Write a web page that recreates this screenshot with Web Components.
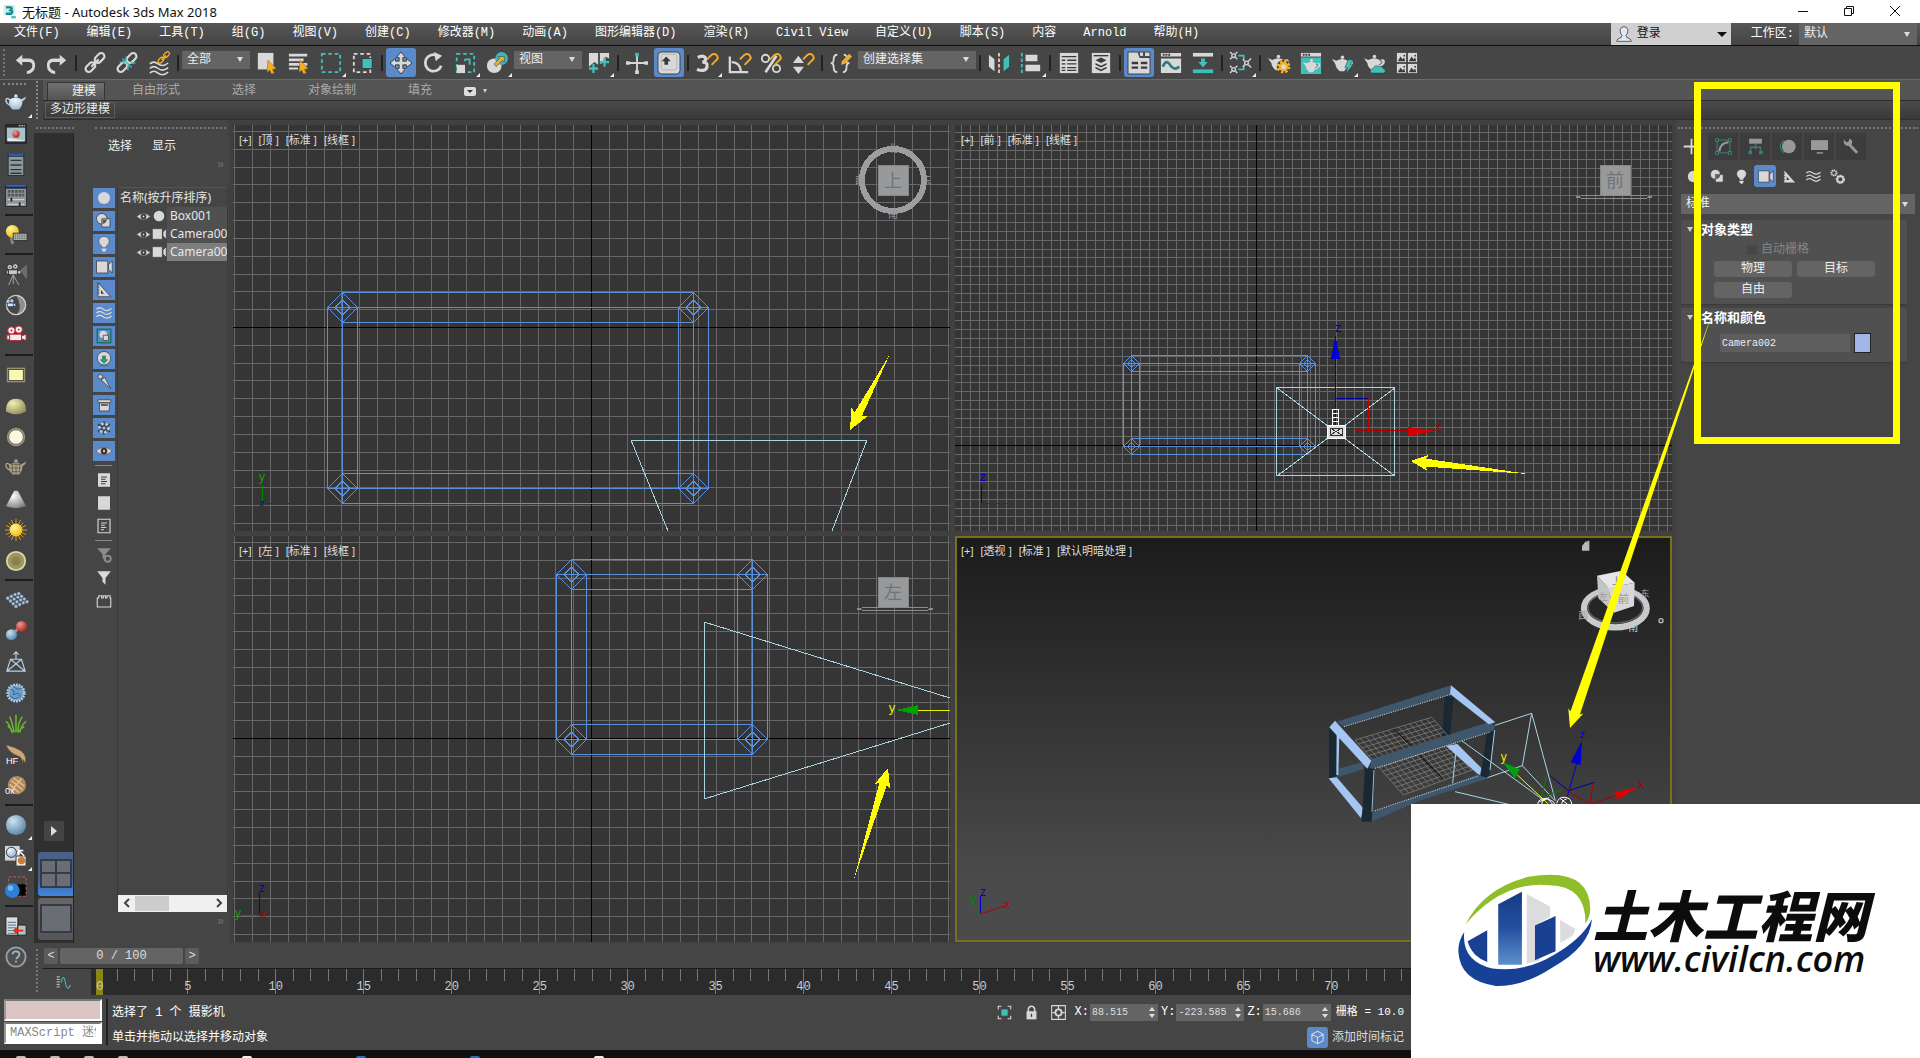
<!DOCTYPE html>
<html lang="zh-CN">
<head>
<meta charset="utf-8">
<title>无标题 - Autodesk 3ds Max 2018</title>
<style>
html, body { margin: 0; height: 100%; overflow: hidden; }
body {
    background: #454545;
    color: #e6e6e6;
    font: 12px/16px "Liberation Mono", "Noto Sans CJK SC", monospace;
    --teal: #3fc1b9;
    --blue: #5b8acb;
    --field: #646464;
}
</style>
</head>
<body>
<max-app></max-app>

<script>
const W = "#d8d8d8", T = "#3fc1b9", Y = "#f4ae25", K = "#3a3a3a";

const teapot = (c, x = 0, y = 0, s = 1) => `<g transform="translate(${x} ${y}) scale(${s})"><path d="M6 9Q1 5 1 9t6 6" fill="none" stroke="${c}" stroke-width="1.500"/><path fill="${c}" d="M5 8q7-4 13 0l5-3-1 3-3 2q0 6-4 9H8Q3 15 5 8z"/><circle cx="12" cy="4.500" r="2" fill="${c}"/></g>`;
const teapotDark = (c, x = 0, y = 0, s = 1) => `<g transform="translate(${x} ${y}) scale(${s})"><path fill="${c}" d="M0 6l5 2q7-4 13 0 6-2 6 2t-8 7l-2 3H9Q4 16 4 12z"/><circle cx="12" cy="4" r="2" fill="${c}"/><path d="M18 9q4 0 2 3l-3 2" fill="none" stroke="${K}"/></g>`;
const magnet = (x = 0, y = 0) => `<path transform="translate(${x} ${y})" d="M12 8l5-5q4-2 6 1t-1 5l-5 5" fill="none" stroke="${Y}" stroke-width="2"/>`;
const cursor = `<path d="M13 9l9 9-4 1 2 4-3 1-2-4-3 2z" fill="${Y}" stroke="#7b5410" stroke-width=".5"/>`;
const chain = (c) => `<g fill="none" stroke="${c}" stroke-width="2.4"><rect x="11" y="3" width="12" height="7" rx="3.5" transform="rotate(-45 17 6.500)"/><rect x="1" y="13" width="12" height="7" rx="3.500" transform="rotate(-45 7 16.500)"/></g>`;
const waves = (c) => `<g fill="none" stroke="${c}" stroke-width="1.700"><path d="M2 7q4-4 9 0t11-1"/><path d="M2 12q4-4 9 0t11-1"/><path d="M2 17q4-4 9 0t11-1"/></g>`;
const movieCam = (c, o) => `<g fill="${c}" stroke="${o}"><circle cx="7" cy="6" r="4"/><circle cx="15" cy="5" r="4"/><rect x="5" y="10" width="13" height="7"/><path d="M18 12l5-2v7l-5-2zM2 11h3v5H2z"/></g><circle cx="7" cy="6" r="1" fill="${o}"/><circle cx="15" cy="5" r="1" fill="${o}"/>`;

const icons = {
    undo: `<path d="M9 3L2 9l7 6v-4h7q4 0 4 4t-6 6v3q9-1 9-9t-7-8H9z" fill="${W}"/>`,
    redo: `<path d="M15 3l7 6-7 6v-4H8q-4 0-4 4t6 6v3Q1 23 1 15t7-8h7z" fill="${W}"/>`,
    link: chain(W) + `<path d="M8 16l8-8" stroke="${W}" stroke-width="2.400"/>`,
    unlink: chain(W) + `<path d="M7 7l10 10M11 5v4M4 11h5M13 15v5M16 12h5" stroke="${T}" stroke-width="1.500"/>`,
    bind: `<g transform="translate(0 6)">${waves(W)}</g><g transform="translate(10 -1) scale(.6)"><g stroke-width="2">${chain(Y)}</g><path d="M8 16l8-8" stroke="${Y}" stroke-width="3"/></g>`,
    select: `<path d="M2 1h17v18H2z" fill="${W}"/>` + cursor,
    byname: `<path d="M1 2h20v3H1zM1 7h16v3H1zM1 12h20v3H1zM1 17h10v2H1z" fill="${W}"/>` + cursor,
    region: `<rect x="2" y="2" width="20" height="20" fill="none" stroke="${T}" stroke-width="2" stroke-dasharray="4 3"/>`,
    window: `<rect x="2" y="2" width="18" height="20" fill="none" stroke="${W}" stroke-width="2" stroke-dasharray="4 3"/><rect x="11" y="7" width="11" height="11" fill="${T}" stroke="${K}"/>`,
    move: `<path d="M12 0l5 6h-3v4h4V7l6 5-6 5v-3h-4v4h3l-5 6-5-6h3v-4H6v3l-6-5 6-5v3h4V6H7z" fill="${W}" stroke="${K}"/>`,
    rotate: `<path d="M17 4A9 9 0 1 0 21 15" fill="none" stroke="${W}" stroke-width="3"/><path d="M13 0l9 4-7 6z" fill="${W}"/>`,
    scale: `<rect x="3" y="2" width="19" height="20" fill="none" stroke="${T}" stroke-width="2" stroke-dasharray="4 3"/><path d="M3 14h9v9H3z" fill="${W}"/><path d="M12 8h5v6M12 8v2" fill="none" stroke="${T}" stroke-width="2"/>`,
    place: `<circle cx="9" cy="15" r="8" fill="${W}"/><circle cx="17" cy="7" r="7" fill="#3fb3c4"/><path d="M9 13l6-6-2-2h7v6l-2-2-7 7z" fill="${Y}" stroke="${K}" stroke-width=".6"/>`,
    pivot: `<path d="M1 1h10v13l-4-3-6 5zM13 1h10v6l-4-2v5l-6 3z" fill="${W}"/><path d="M6 13v10M1 18h10M18 6v10M13 11h10" stroke="${T}" stroke-width="2.500"/>`,
    manipulate: `<path d="M3 12h18M12 4v17" stroke="${W}" stroke-width="2"/><path d="M0 10h4v4H0zM20 10h4v4h-4zM10 20h4v4h-4z" fill="${W}"/><path d="M10 1h4v4h-4z" fill="${T}"/>`,
    override: `<rect x="0" y="0" width="24" height="24" rx="4" fill="${W}" stroke="${K}"/><rect x="3.500" y="2.500" width="17" height="17" rx="2" fill="none" stroke="#b4b4b4"/><path d="M9 5l5 5h-3v4H7v-4H4z" fill="${K}"/>`,
    snap3: `<path d="M2 6q5-3 8 0 2 4-3 5 6 0 5 5-1 6-11 3" fill="none" stroke="${W}" stroke-width="3.500"/>` + magnet(0, 0),
    snapangle: `<path d="M2 5v17h20M4 11q9 0 10 10" fill="none" stroke="${W}" stroke-width="2.500"/>` + magnet(1, 0),
    snappercent: `<circle cx="6" cy="7" r="4" fill="none" stroke="${W}" stroke-width="2"/><circle cx="18" cy="18" r="4" fill="none" stroke="${W}" stroke-width="2"/><path d="M18 4L6 22" stroke="${W}" stroke-width="3"/>` + magnet(-1, 0),
    snapspin: `<path d="M7 4l6 8H1zM1 16h12l-6 8z" fill="${W}"/>` + magnet(0, 0),
    sets: `<path d="M8 3Q4 3 4 8t-3 4q3 0 3 5t4 5M15 3q4 0 3 5t3 4q-3 0-3 5t-4 5" fill="none" stroke="${W}" stroke-width="2"/><path d="M12 14l1-4 8-8 3 3-8 8z" fill="${Y}"/>`,
    mirror: `<path d="M1 3l6 5v13l-6-5z" fill="${W}"/><path d="M23 3l-6 5v13l6-5z" fill="${T}"/><path d="M12 1v23" stroke="#eccba8" stroke-width="2" stroke-dasharray="4 2"/>`,
    align: `<path d="M2 1v23" stroke="${T}" stroke-width="2" stroke-dasharray="4 2"/><path d="M6 3h13v7H6zM6 14h16v7H6z" fill="${W}"/>`,
    scene: `<path d="M2 1h20v22H2z" fill="${W}"/><path d="M4 5h16M4 9h4M10 9h10M4 13h4M10 13h10M4 17h4M10 17h10M4 20h4M10 20h10" stroke="${K}" stroke-width="1.500"/>`,
    layers: `<path d="M2 1h20v22H2z" fill="${W}"/><path d="M4 4h16" stroke="${K}" stroke-width="1.500"/><path d="M12 6l6 3-6 3-6-3zM6 12l6 3 6-3v2l-6 3-6-3zM6 16l6 3 6-3v2l-6 3-6-3z" fill="${K}"/>`,
    ribbon: `<path d="M0 0h11l2 6h11v18H0z" fill="${W}" stroke="${K}"/><path d="M12 0h5v5h-4zM18 0h6v5h-6z" fill="${W}" stroke="${K}"/><path d="M4 12h7M14 12h7M4 17h7M14 17h7" stroke="${K}" stroke-width="2.500"/>`,
    curve: `<path d="M1 1h22v4H1zM1 7h22v16H1z" fill="${W}"/><path d="M3 3h8" stroke="${K}" stroke-width="2" stroke-dasharray="2 1"/><path d="M3 16q4-9 8-2t10 2" fill="none" stroke="#287e83" stroke-width="3"/>`,
    schematic: `<path d="M1 1h22v4H1z" fill="${W}"/><path d="M1 19h22v4H1z" fill="${T}"/><path d="M10 7h4v4h3l-5 6-5-6h3z" fill="${T}"/>`,
    material: `<g fill="none" stroke="${W}" stroke-width="1.500"><circle cx="4" cy="4" r="2"/><circle cx="18" cy="12" r="2"/><circle cx="4" cy="19" r="2"/></g><path d="M9 4h6v4M9 19h6v-4" fill="none" stroke="${T}" stroke-width="2"/><path d="M20 10l3-3M20 14l3 3M16 10l-2-2M16 14l-2 2M0 0l2 2M0 8l2-2M8 0L6 2M8 8L6 6M0 15l2 2M0 23l2-2M8 15l-2 2M8 23l-2-2" stroke="${W}" stroke-width="1.500"/>`,
    rsetup: teapotDark(W, 0, 1, .95) + `<circle cx="17" cy="16" r="7.500" fill="${K}"/><circle cx="17" cy="16" r="6" fill="none" stroke="${Y}" stroke-width="3" stroke-dasharray="2.700 2"/><circle cx="17" cy="16" r="4" fill="${W}" stroke="${Y}" stroke-width="2.500"/>`,
    rframe: `<path d="M1 1h22v4H1z" fill="${W}"/><path d="M3 3h8" stroke="${K}" stroke-width="2" stroke-dasharray="2 1"/><path d="M1 6h22v18H1z" fill="${T}"/>` + teapotDark(W, 3, 6, .8),
    render: teapotDark(W, 0, 2, .95) + `<path d="M18 8l5 1-3 5h3l-8 10 2-7h-3z" fill="${T}" stroke="${K}" stroke-width=".6"/>`,
    cloud: teapotDark(W, 0, 1, .95) + `<path d="M8 23q-3-4 2-5 2-5 6-2 4-1 5 2 4 2 1 5z" fill="${T}" stroke="${K}" stroke-width=".6"/>`,
    gallery: [[1, 1], [13, 1], [1, 13], [13, 13]].map(([x, y]) => `<g transform="translate(${x} ${y})"><path d="M0 0h10v10H0z" fill="${W}"/><path d="M1 9l3-5 2 3 2-2 1 4z" fill="${K}"/><circle cx="8" cy="3" r="1" fill="${K}"/></g>`).join(""),

    teapotblue: teapot("url(#blue)", 0, 0, 1),
    rendershot: `<path d="M0 1h24v22H0z" fill="#262a2d"/><path d="M2 5h20v15H2z" fill="#a8c0cc"/><path d="M3 16l18 3v1H3z" fill="#e8e8e8"/><circle cx="12" cy="12" r="4" fill="url(#red)"/><path d="M15 3h7" stroke="#fff" stroke-dasharray="2 1"/>`,
    listpanel: `<path d="M3 0h18v24H3z" fill="#1d2a36"/><path d="M4 3h16v20H4z" fill="#8e999e"/><path d="M4 1h16" stroke="#2a62b8" stroke-width="2"/><path d="M6 7h12M6 12h12M6 17h12M6 21h12" stroke="#2f3638" stroke-width="1.500"/>`,
    sliders: `<path d="M0 0h24v24H0z" fill="#20262c"/><path d="M1 4h22v19H1z" fill="#8f9498"/><path d="M1 1h22" stroke="#2a62c8" stroke-width="2"/><path d="M3 7h18M3 11h18" stroke="#555" stroke-width="3" stroke-dasharray="3 1"/><path d="M3 16h18M3 21h18" stroke="#ddd"/><path d="M7 14v4M16 19v4" stroke="#222" stroke-width="2"/>`,
    bulb: `<path d="M5 15h6l-2 7H7z" fill="#888"/><circle cx="8" cy="8" r="7" fill="url(#gold)"/><rect x="9" y="10" width="15" height="8" fill="#aeb6b8" stroke="#333"/><path d="M11 12h11M11 14h11M11 16h11" stroke="#444" stroke-dasharray="1 1"/>`,
    camtripod: `<g transform="scale(.75)">${movieCam("#bfc8cc", "#222")}</g><path d="M9 13L4 24M9 13v10M9 13l6 11" stroke="#aaa"/><path d="M16 8l8-6v16z" fill="#6c6c6c"/>`,
    cammoon: `<path d="M12 1a11 11 0 0 1 0 22q5-5 4-11T12 1z" fill="#8e8e8e"/><circle cx="12" cy="12" r="10.500" fill="none" stroke="#ccc" stroke-width="1.500"/><g transform="translate(0 5) scale(.5)">${movieCam("#cfe8ff", "#335")}</g>`,
    camred: movieCam("#e9eded", "#c61a2a"),
    rectlight: `<rect x="2" y="4" width="20" height="16" fill="#c9c48a" opacity=".6"/><rect x="4" y="6" width="16" height="12" fill="#fbf6b2" stroke="#444"/>`,
    dome: `<path d="M1 18Q1 4 12 4t11 14q-11 6-22 0z" fill="url(#cream)"/>`,
    spherelight: `<circle cx="12" cy="12" r="10" fill="#98987a"/><circle cx="12" cy="12" r="8" fill="#fbfae0" stroke="#666"/>`,
    teapotwire: teapot("#aaa384") + `<path d="M6 8h12M5 12h12M7 16h9M8 6v12M12 5v14M16 7v10" stroke="#4f4c3c" stroke-width=".700"/>`,
    cone: `<path d="M10 3h4l9 17q-11 4-22 0z" fill="url(#grey)"/>`,
    sun: `<path d="M12 0v24M0 12h24M4 4l16 16M20 4L4 20M7 1l10 22M17 1L7 23M1 7l22 10M1 17L23 7" stroke="#e8a31a"/><circle cx="12" cy="12" r="7" fill="url(#gold)"/>`,
    disc: `<circle cx="12" cy="12" r="10" fill="#9c9660" stroke="#d9d6a0" stroke-width="2"/><circle cx="12" cy="12" r="5" fill="#87824f"/>`,
    points: [0, 1, 2, 3].map(r => [0, 1, 2, 3].map(c => `<circle cx="${3 + c * 4 + r * 3}" cy="${10 + r * 3 - c * 2 + (c === 3 ? 1 : 0)}" r="2" fill="#a9c0d4" stroke="#33475a" stroke-width=".500"/>`).join("")).join(""),
    molecule: `<path d="M7 16L17 7" stroke="#999" stroke-width="3"/><circle cx="7" cy="16" r="6" fill="url(#sky)"/><circle cx="18" cy="7" r="6" fill="url(#red)"/>`,
    pyramid: `<g fill="none" stroke="#b7cfe4" stroke-width="1.300"><path d="M6 9h12l4 13H2zM6 9l16 13M18 9L2 22M12 9V1M9 4l3-3 3 3"/></g>`,
    fur: `<circle cx="12" cy="12" r="9" fill="#6f9dc8" stroke="#a9cdea" stroke-width="3" stroke-dasharray="2 1"/><path d="M6 8l4 2-1 4 5-2 3 4M9 5l5 3 4-1M5 15l5 3 6-1" fill="none" stroke="#33608e"/>`,
    grass: `<g fill="none" stroke="#6fb531" stroke-width="1.700"><path d="M8 22Q5 12 1 9M10 22Q8 10 5 4M12 22V2M14 22q0-12 5-18M16 22q1-8 7-13M9 22Q6 16 3 14M15 22q1-5 6-7"/></g><path d="M8 22h9" stroke="#2d5e17" stroke-width="2"/>`,
    hair: `<path d="M1 1q12 3 17 7 6 5 4 13l-2-4-1 4q0-7-5-8Q5 10 1 1z" fill="#c9a77b" stroke="#6d5233" stroke-width=".600"/><text x="1" y="22" font-size="10" fill="#fff">HF</text>`,
    ox: `<circle cx="13" cy="11" r="10" fill="#b18a5e"/><path d="M7 6l12 10M9 3l12 9M5 10l10 9M18 4L8 16" stroke="#e3c498" stroke-width="1.500"/><text x="0" y="21" font-size="10" fill="#fff">0x</text>`,
    ball: `<circle cx="12" cy="12" r="11" fill="url(#sky)"/>`,
    swap: `<path d="M0 1h16v16H0z" fill="#cfd5da"/><circle cx="7" cy="8" r="5.500" fill="url(#blue)" stroke="#333"/><path d="M12 12h11v11H12z" fill="#f0ece4" stroke="#333"/><circle cx="18" cy="17" r="4" fill="#c97f3b"/><path d="M21 12l-5-5M15 11V6h5" stroke="#fff" fill="none" stroke-width="1.500"/>`,
    regionball: `<path d="M14 9h9v13h-9z" fill="#000"/><rect x="4" y="1" width="19" height="21" fill="none" stroke="#d9604e" stroke-dasharray="3 2"/><circle cx="8" cy="16" r="8" fill="#2a80d8"/><circle cx="6" cy="13" r="3" fill="#72b8f5"/>`,
    lists: `<path d="M1 2h13v20H1z" fill="#d9dee0" stroke="#222"/><path d="M3 8h9M3 11h9M3 14h9M3 17h9M3 20h9" stroke="#4b6a86"/><path d="M14 11h9v11h-9z" fill="#b9c0c4" stroke="#222"/><path d="M20 17h-9M13 14l-3 3 3 3" stroke="#e02b1c" stroke-width="2" fill="none"/>`,
    help: `<circle cx="12" cy="12" r="10.500" fill="#4b5054" stroke="#9ba1a4" stroke-width="2"/><path d="M8 9q1-4 5-3t2 5l-3 3" fill="none" stroke="#aab0b3" stroke-width="2"/><path d="M11 16h2v2h-2z" fill="#aab0b3"/>`,

    geo: `<circle cx="12" cy="12" r="8" fill="${W}"/>`,
    shapes: `<circle cx="9" cy="9" r="7" fill="${W}" stroke="${K}"/><path d="M9 9h11v11H9z" fill="${W}" stroke="${K}"/><path d="M10 10h6q-1 5-6 6z" fill="${K}" opacity=".8"/>`,
    light: `<path d="M12 2q6 0 7 6 0 4-4 7v2H9v-2Q5 12 5 8q1-6 7-6z" fill="${W}" stroke="${K}" stroke-width=".700"/><path d="M9 18h6v2l-3 3-3-3z" fill="${W}"/>`,
    camera: `<path d="M2 4h15v16H2z" fill="${W}" stroke="${K}"/><path d="M18 9l5-5v16l-5-5z" fill="${W}" stroke="${K}"/>`,
    helper: `<path d="M4 2l17 19H4z" fill="${W}" stroke="${K}"/><path d="M8 12l4 5H8z" fill="${K}"/><path d="M3 4h4M3 8h3M3 12h3M3 16h3" stroke="${K}"/>`,
    warp: waves(W),
    gears: `<g fill="none" stroke="${W}" stroke-width="2"><circle cx="7" cy="7" r="4" stroke-dasharray="2 1"/><circle cx="16" cy="16" r="5.500" stroke-dasharray="3 1"/><circle cx="16" cy="16" r="4"/><circle cx="7" cy="7" r="3" stroke-width="1"/></g>`,
    group: `<rect x="3" y="3" width="18" height="18" fill="none" stroke="#1d6f6a" stroke-width="2"/><circle cx="11" cy="10" r="5" fill="${W}"/><path d="M11 11h7v7h-7z" fill="${W}" stroke="${K}"/>`,
    xref: `<circle cx="12" cy="11" r="9" fill="${W}" stroke="${K}"/><path d="M10 8h4v5h3l-5 5-5-5h3zM6 21h12" fill="#2a9a80" stroke="#2a7a70"/>`,
    bone: `<circle cx="7" cy="5" r="3" fill="${W}" stroke="${K}"/><path d="M8 9l5-3 8 15z" fill="${W}" stroke="${K}"/>`,
    container: `<path d="M4 5h17v4H4zM6 9h13v11H6z" fill="${W}" stroke="${K}"/><path d="M8 12h9" stroke="${K}" stroke-width="2"/>`,
    frozen: `<g stroke="${K}" stroke-width="2"><path d="M12 3v18M4 7l16 10M20 7L4 17"/></g><circle cx="12" cy="12" r="6" fill="none" stroke="#cbd6c4" stroke-width="3" stroke-dasharray="3 3"/><circle cx="12" cy="12" r="2" fill="#cbb7d6"/>`,
    eye: `<path d="M1 12Q12 2 23 12 12 22 1 12z" fill="${W}" stroke="#555"/><circle cx="12" cy="12" r="4.500" fill="#403a34"/><circle cx="12" cy="12" r="1.500" fill="${W}"/>`,
    doc: `<path d="M4 3h16v18H4z" fill="${W}"/><path d="M8 8h8M8 11h6M8 14h8M8 17h6" stroke="${K}" stroke-width="1.500"/>`,
    blank: `<path d="M4 3h16v18H4z" fill="${W}"/>`,
    docline: `<path d="M4 3h16v18H4z" fill="none" stroke="${W}" stroke-width="1.500"/><path d="M8 8h8M8 11h5M8 14h7M8 17h4" stroke="${W}" stroke-width="1.500"/>`,
    funnelset: `<path d="M3 3h18l-7 8v9l-4-4v-5z" fill="#8b8b8b"/><circle cx="17" cy="17" r="4" fill="none" stroke="#8b8b8b" stroke-width="2.500"/>`,
    funnel: `<path d="M3 3h18l-7 9v9l-4-4v-5z" fill="${W}"/>`,
    bricks: `<path d="M3 20V8h2V5h4v3h2V5h3v3h2V5h4v3h1v12z" fill="none" stroke="${W}" stroke-width="1.500"/>`,

    plus: `<path d="M12 1v22M1 12h22" stroke="${W}" stroke-width="2.500"/>`,
    modify: `<rect x="3" y="3" width="18" height="18" fill="none" stroke="#378078" stroke-width="1.500"/><path d="M6 19q1-12 13-13" fill="none" stroke="#999" stroke-width="3"/><path d="M1 1h4v4H1zM19 1h4v4h-4zM1 19h4v4H1zM19 19h4v4h-4z" fill="${K}" stroke="#378078" stroke-width="1.500"/>`,
    hierarchy: `<path d="M3 1h18v7H3z" fill="#999"/><path d="M12 8v5M5 18v-5h14v5M12 13v3" stroke="#378078" stroke-width="2" fill="none"/><path d="M2 18h5v5H2zM17 18h5v5h-5z" fill="#378078"/>`,
    motion: `<path d="M7 3q-10 9 0 18M10 3Q0 12 10 21" fill="none" stroke="#378078" stroke-width="1.500"/><circle cx="14" cy="12" r="9.500" fill="#999"/>`,
    display: `<path d="M0 3h24v14H0z" fill="#999"/><path d="M8 20h9v2H8z" fill="#999"/>`,
    utility: `<path d="M8 8l12 13" stroke="#999" stroke-width="4"/><path d="M1 2l4 4 3-1 1-4q4 1 4 5t-5 5-7-4z" fill="#999"/>`,

    iso: `<path d="M2 7V2h5M17 2h5v5M22 17v5h-5M7 22H2v-5" fill="none" stroke="${W}" stroke-width="1.700"/><path d="M7 7h10v10H7z" fill="${T}"/>`,
    lock: `<path d="M4 10h16v13H4z" fill="${W}"/><path d="M7 11V6q1-4 5-4t5 4v5" fill="none" stroke="${W}" stroke-width="2.500"/><path d="M11 14h2v5h-2z" fill="${K}"/>`,
    target: `<path d="M1 1h22v22H1z" fill="none" stroke="${W}" stroke-width="1.700"/><circle cx="12" cy="12" r="5" fill="none" stroke="${W}" stroke-width="3"/><path d="M12 2v5M12 17v5M2 12h5M17 12h5" stroke="${W}" stroke-width="2"/>`,
    cube: `<path d="M12 2l9 5v10l-9 5-9-5V7zM3 7l9 5 9-5M12 12v10" fill="none" stroke="${W}" stroke-width="1.700"/>`,
    keyline: `<path d="M1 3h5M1 7h5M1 11h5M1 15h5M1 19h5" stroke="${W}" stroke-width="1.500"/><path d="M8 12q4-16 7 0t8 4" fill="none" stroke="${T}" stroke-width="1.700"/>`,
    user: `<path d="M1 23q0-4 7-6l1-3Q6 11 6 6q1-5 6-5t6 5q0 5-3 8l1 3q7 2 7 6z" fill="#dce8f4" stroke="#222"/>`,
    logo3: `<path d="M1 0h20v18H1z" fill="#d5eceb"/><path d="M5 4h8q4 1 0 5 5 1 1 6H5" fill="none" stroke="#118a92" stroke-width="4"/><path d="M14 19h8v4h-8z" fill="#47bdbd"/>`
};

const gradient = (id, a, b) => `<radialGradient id="${id}" cx=".35" cy=".3" r=".8"><stop stop-color="${a}"/><stop offset="1" stop-color="${b}"/></radialGradient>`;
const defs = gradient("blue", "#f2f8fc", "#8fb0cc") + gradient("sky", "#cfe3ee", "#4f7ea6") + gradient("red", "#f39a90", "#9d1c1c")
    + gradient("gold", "#fff59a", "#f0b400") + gradient("cream", "#f4efb8", "#8d8753") + gradient("grey", "#fff", "#777");

class MaxIcon extends HTMLElement {
    constructor() {
        super();
        this.attachShadow({ mode: "open" });
    }

    connectedCallback() {
        const size = this.getAttribute("size") || 24;
        this.shadowRoot.innerHTML = `
        <style>
        :host { display: block; flex: none; width: ${size}px; height: ${size}px; }
        svg { display: block; width: 100%; height: 100%; overflow: visible; font-family: "Liberation Sans", sans-serif; }
        </style>
        <svg viewBox="0 0 24 24" aria-hidden="true"><defs>${defs}</defs>${icons[this.getAttribute("name")]}</svg>`;
    }
}
customElements.define("max-icon", MaxIcon);

// Icon button; the host sets the cell size, the button fills it
class MaxTool extends HTMLElement {
    constructor() {
        super();
        this.attachShadow({ mode: "open" });
    }

    connectedCallback() {
        const name = this.getAttribute("icon");
        this.shadowRoot.innerHTML = `
        <style>
        :host { display: flex; flex: none; justify-content: center; align-items: center; }
        button { position: relative; display: grid; place-items: center; width: 100%; height: 100%; padding: 0; border: 0; background: none; }
        :host([active]) button { background: var(--blue); border-radius: 3px; }
        i { position: absolute; right: 0; bottom: 0; border: 2px solid transparent; border-right-color: #eee; border-bottom-color: #eee; }
        </style>
        <button aria-label="${this.getAttribute("label") || name}">
            <max-icon name="${name}" size="${this.getAttribute("size") || 22}"></max-icon>
            ${this.hasAttribute("flyout") ? "<i></i>" : ""}
        </button>`;
    }
}
customElements.define("max-tool", MaxTool);

class MaxSelect extends HTMLElement {
    constructor() {
        super();
        this.attachShadow({ mode: "open" });
    }

    connectedCallback() {
        this.shadowRoot.innerHTML = `
        <style>
        :host { display: grid; align-items: center; background: var(--field); color: #eee; }
        select { grid-area: 1 / 1; appearance: none; width: 100%; height: 100%; padding: 0 16px 0 5px; border: 0; background: none; color: inherit; font: inherit; }
        i { grid-area: 1 / 1; justify-self: end; margin-right: 7px; border: 3px solid transparent; border-top: 5px solid #ddd; border-bottom: 0; pointer-events: none; }
        </style>
        <select aria-label="${this.getAttribute("label")}"><option>${this.getAttribute("value")}</option></select><i></i>`;
    }
}
customElements.define("max-select", MaxSelect);

class TitleBar extends HTMLElement {
    constructor() {
        super();
        this.attachShadow({ mode: "open" }).innerHTML = `
        <style>
        :host { display: flex; align-items: center; height: 23px; background: #fff; color: #111; font: 13px/18px "Noto Sans", "Noto Sans CJK SC", sans-serif; }
        max-icon { margin: 0 5px 0 3px; }
        h1 { flex: 1; margin: 0; font: inherit; }
        button { width: 46px; height: 22px; padding: 0; border: 0; background: none; }
        button:last-child { margin-right: 2px; }
        svg { fill: none; stroke: #111; }
        </style>
        <max-icon name="logo3" size="14"></max-icon>
        <h1>无标题 - Autodesk 3ds Max 2018</h1>
        <button aria-label="最小化"><svg width="10" height="10"><path d="M0 5.500h10"/></svg></button>
        <button aria-label="还原"><svg width="10" height="10"><path d="M.5 2.500h7v7h-7zM2.500 2V.5h7v7H8"/></svg></button>
        <button aria-label="关闭"><svg width="10" height="10"><path d="M0 0l10 10M10 0L0 10"/></svg></button>`;
    }
}
customElements.define("title-bar", TitleBar);

class MenuBar extends HTMLElement {
    constructor() {
        super();
        const menus = ["文件(F)", "编辑(E)", "工具(T)", "组(G)", "视图(V)", "创建(C)", "修改器(M)", "动画(A)", "图形编辑器(D)",
            "渲染(R)", "Civil View", "自定义(U)", "脚本(S)", "内容", "Arnold", "帮助(H)"];
        this.attachShadow({ mode: "open" }).innerHTML = `
        <style>
        :host { display: flex; align-items: stretch; height: 22px; border-bottom: 1px solid #111; background: linear-gradient(#575757, #444); color: #fff; }
        nav { display: flex; flex: 1; gap: 27px; padding: 0 0 2px 14px; align-items: center; }
        button { padding: 0; border: 0; background: none; color: inherit; font: inherit; white-space: nowrap; }
        .login { display: flex; align-items: center; gap: 5px; width: 120px; padding: 0 4px 0 5px; background: #d0d0d0; color: #111; text-align: left; box-sizing: border-box; }
        .login span { flex: 1; }
        .login i { border: 5px solid transparent; border-top-color: #111; border-bottom: 0; }
        label { display: flex; align-items: center; padding: 0 5px 0 20px; }
        max-select { width: 118px; margin-right: 3px; }
        </style>
        <nav>${menus.map(m => `<button>${m}</button>`).join("")}</nav>
        <button class="login"><max-icon name="user" size="16"></max-icon><span>登录</span><i></i></button>
        <label>工作区:</label>
        <max-select label="工作区" value="默认"></max-select>`;
    }
}
customElements.define("menu-bar", MenuBar);

class ToolBar extends HTMLElement {
    constructor() {
        super();
        const t = (icon, attrs = "") => `<max-tool icon="${icon}" ${attrs}></max-tool>`;
        const sep = "<hr>";
        this.attachShadow({ mode: "open" }).innerHTML = `
        <style>
        :host { display: flex; align-items: center; height: 33px; border-bottom: 1px solid #6a6a6a; background: #464646; }
        max-tool { width: 30px; height: 29px; margin: 0 1px; }
        hr { flex: none; width: 2px; height: 16px; margin: 0 2px; border: 0; background: #222; }
        .grip { width: 3px; height: 27px; margin: 0 3px; border-left: 2px dotted #777; box-sizing: border-box; }
        max-select { width: 68px; height: 18px; margin: 0 1px 6px; }
        max-select.wide { width: 118px; }
        </style>
        <div class="grip"></div>
        ${t("undo")}${t("redo")}${sep}
        ${t("link")}${t("unlink")}${t("bind")}${sep}
        <max-select label="选择过滤器" value="全部"></max-select>
        ${t("select")}${t("byname")}${t("region", "flyout")}${t("window")}${sep}
        ${t("move", "active")}${t("rotate")}${t("scale", "flyout")}${t("place", "flyout")}
        <max-select label="参考坐标系" value="视图"></max-select>
        ${t("pivot", "flyout")}${sep}
        ${t("manipulate")}${t("override", "active")}${sep}
        ${t("snap3", "flyout")}${t("snapangle")}${t("snappercent")}${t("snapspin")}${sep}
        ${t("sets")}
        <max-select class="wide" label="命名选择集" value="创建选择集"></max-select>${sep}
        ${t("mirror")}${t("align", "flyout")}${sep}
        ${t("scene")}${t("layers")}${sep}
        ${t("ribbon", "active")}${t("curve")}${t("schematic")}${sep}
        ${t("material", "flyout")}${sep}
        ${t("rsetup")}${t("rframe")}${t("render", "flyout")}${t("cloud")}${t("gallery")}`;
    }
}
customElements.define("tool-bar", ToolBar);

class SideTools extends HTMLElement {
    constructor() {
        super();
        const groups = [["teapotblue+", "rendershot", "listpanel", "sliders"], ["bulb"], ["camtripod", "cammoon", "camred"],
            ["rectlight", "dome", "spherelight", "teapotwire", "cone", "sun", "disc"],
            ["points", "molecule", "pyramid", "fur", "grass", "hair", "ox"], ["ball+", "swap+", "regionball"], ["lists", "help"]];
        this.attachShadow({ mode: "open" }).innerHTML = `
        <style>
        :host { display: flex; flex-direction: column; flex: none; width: 34px; }
        .grip { margin: 3px 8px 2px 3px; border-top: 2px dotted #888; }
        max-tool { width: 32px; height: 31px; }
        hr { width: 28px; height: 2px; margin: 3px 1px 3px 5px; border: 0; background: #1d1d1d; }
        </style>
        <div class="grip"></div>
        ${groups.map(g => g.map(n => `<max-tool icon="${n.replace("+", "")}" ${n.endsWith("+") ? "flyout" : ""}></max-tool>`).join("")).join("<hr>")}`;
    }
}
customElements.define("side-tools", SideTools);

class RibbonBar extends HTMLElement {
    constructor() {
        super();
        this.attachShadow({ mode: "open" }).innerHTML = `
        <style>
        :host { display: flex; flex: none; height: 40px; }
        .grip { width: 3px; margin: 1px 4px 1px 2px; border-left: 2px dotted #888; box-sizing: border-box; }
        .ribbon { flex: 1; display: flex; flex-direction: column; }
        .tabs { display: flex; align-items: flex-end; gap: 52px; height: 20px; padding-left: 4px; background: #545454; border-bottom: 1px solid #2b2b2b; }
        .tabs button { height: 18px; color: #aaa; }
        .tabs button:first-child { width: 58px; margin-right: -25px; padding-left: 16px; border: 1px solid #333; border-bottom: 0; background: linear-gradient(#707070, #545454); color: #eee; }
        button { padding: 0; border: 0; background: none; color: #e6e6e6; font: inherit; box-sizing: border-box; }
        .tabs .more { display: flex; align-items: center; gap: 7px; margin-left: -20px; }
        .more b { display: grid; place-items: center; width: 12px; height: 9px; border-radius: 2px; background: #ddd; }
        .more b::before { content: ""; border: 3px solid transparent; border-top-color: #333; border-bottom: 0; }
        .more i { border: 2px solid transparent; border-top: 4px solid #ccc; border-bottom: 0; }
        .panel { display: flex; flex: 1; padding: 1px 2px; background: linear-gradient(#4b4b4b, #393939); border-bottom: 1px solid #2e2e2e; }
        .panel button { padding: 0 4px; border: 1px solid #5c5c5c; line-height: 14px; }
        </style>
        <div class="grip"></div>
        <div class="ribbon">
            <div class="tabs">
                <button>建模</button><button>自由形式</button><button>选择</button><button>对象绘制</button><button>填充</button>
                <button class="more" aria-label="显示选项"><b></b><i></i></button>
            </div>
            <div class="panel"><button>多边形建模</button></div>
        </div>`;
    }
}
customElements.define("ribbon-bar", RibbonBar);

class LayoutTabs extends HTMLElement {
    constructor() {
        super();
        this.attachShadow({ mode: "open" }).innerHTML = `
        <style>
        :host { display: flex; flex-direction: column; flex: none; width: 40px; padding-top: 7px; box-sizing: border-box; }
        .grip { height: 3px; margin: 0 0 0 2px; border-top: 2px dotted #777; box-sizing: border-box; }
        .strip { flex: 1; display: flex; flex-direction: column; justify-content: flex-end; gap: 2px; margin-top: 3px; padding: 0 0 3px 4px; background: #2f2f2f; border-right: 1px solid #222; }
        button { display: grid; place-items: center; padding: 0; border: 0; border-radius: 3px 0 0 3px; background: linear-gradient(#666, #555); height: 42px; }
        .play { width: 20px; height: 20px; margin: 0 0 9px 6px; border-radius: 2px; background: #444; }
        .on { height: 44px; background: linear-gradient(#4a6185, #46618d 60%, #3f86e0); }
        .play i { border: 5px solid transparent; border-left: 6px solid #ddd; border-right: 0; }
        svg { fill: #6a6e74; stroke: #333b48; stroke-width: 2; }
        </style>
        <div class="grip"></div>
        <div class="strip">
            <button class="play" aria-label="展开"><i></i></button>
            <button class="on" aria-label="四视口布局"><svg width="32" height="30"><path d="M1 1h30v27H1zM16 1v27M1 14h30"/></svg></button>
            <button aria-label="单视口布局"><svg width="32" height="30"><path d="M1 1h30v27H1z"/></svg></button>
        </div>`;
    }
}
customElements.define("layout-tabs", LayoutTabs);

class SceneExplorer extends HTMLElement {
    constructor() {
        super();
        const filters = ["geo", "shapes", "light", "camera", "helper", "warp", "group", "xref", "bone", "container", "frozen", "eye"];
        const t = n => `<max-tool icon="${n}" size="18"></max-tool>`;
        const rows = [["geo", "Box001"], ["camera", "Camera001"], ["camera", "Camera002"]];
        this.attachShadow({ mode: "open" }).innerHTML = `
        <style>
        :host { display: flex; flex-direction: column; flex: none; width: 155px; padding: 7px 1px 11px 19px; box-sizing: border-box; font: 12px/18px "Noto Sans", "Noto Sans CJK SC", sans-serif; }
        .grip { height: 3px; margin: 0 2px; border-top: 2px dotted #777; box-sizing: border-box; }
        nav { display: flex; gap: 20px; padding: 7px 0 0 15px; }
        button { padding: 0; border: 0; background: none; color: #eee; font: inherit; }
        .more { height: 20px; padding-right: 4px; text-align: right; color: #6d7182; font: 12px/18px "Liberation Sans", sans-serif; }
        .main { flex: 1; display: flex; min-height: 0; margin-top: 12px; }
        .filters { display: flex; flex-direction: column; gap: 3px; width: 24px; padding-top: 1px; border-right: 1px solid #3a3a3a; }
        .filters max-tool { width: 22px; height: 20px; }
        .filters max-tool[lit] { background: var(--blue); }
        .filters hr { width: 17px; height: 1px; margin: 1px 2px; border: 0; background: #888; }
        .tree { flex: 1; display: flex; flex-direction: column; min-width: 0; border-right: 1px solid #3a3a3a; }
        h2 { margin: 0; padding: 0 2px; border-top: 1px solid #555; font-size: 12px; font-weight: 400; line-height: 19px; white-space: nowrap; }
        ul { flex: 1; margin: 0; padding: 0; list-style: none; }
        li { display: flex; align-items: center; height: 18px; padding-left: 18px; }
        li span { flex: 1; padding-left: 3px; background: #505050; overflow: hidden; }
        li.on span { background: #7d7d7d; }
        .bar { display: flex; align-items: center; height: 17px; background: #f0f0f0; }
        .bar button { width: 17px; height: 17px; }
        .bar i { width: 34px; height: 15px; background: #cdcdcd; }
        .bar em { flex: 1; }
        svg { fill: none; stroke: #444; stroke-width: 2; }
        </style>
        <div class="grip"></div>
        <nav><button>选择</button><button>显示</button></nav>
        <div class="more">»</div>
        <div class="main">
            <div class="filters">
                ${filters.map(n => `<max-tool lit icon="${n}" size="18"></max-tool>`).join("")}
                <hr>${t("doc")}${t("blank")}${t("docline")}<hr>${t("funnelset")}${t("funnel")}${t("bricks")}
            </div>
            <div class="tree">
                <h2>名称(按升序排序)</h2>
                <ul aria-label="场景对象">${rows.map(([i, n], k) => `<li class="${k === 2 ? "on" : ""}"><max-icon name="eye" size="15"></max-icon><max-icon name="${i}" size="16"></max-icon><span>${n}</span></li>`).join("")}</ul>
                <div class="bar">
                    <button aria-label="向左"><svg width="8" height="10"><path d="M6 1L2 5l4 4"/></svg></button><i></i><em></em>
                    <button aria-label="向右"><svg width="8" height="10"><path d="M2 1l4 4-4 4"/></svg></button>
                </div>
            </div>
        </div>
        <div class="more">»</div>`;
    }
}
customElements.define("scene-explorer", SceneExplorer);

/* ---- viewport drawings ---- */
const line = (pts, color, extra = "") => `<polyline points="${pts}" fill="none" stroke="${color}" ${extra}/>`;
const poly = (pts, color) => `<polygon points="${pts}" fill="${color}"/>`;
const label = (x, y, s, color, size = 12) => `<text x="${x}" y="${y}" fill="${color}" font-size="${size}" text-anchor="middle">${s}</text>`;

function grid(x0, y0, w, h, cx, cy, step) {
    let d = "";
    for (let i = -80; i < 80; i++) {
        const x = Math.round(cx + i * step), y = Math.round(cy + i * step);
        if (x > x0 && x < x0 + w) d += `M${x}.5 ${y0}v${h}`;
        if (y > y0 && y < y0 + h) d += `M${x0} ${y}.5h${w}`;
    }
    return `<path d="${d}" stroke="#686868"/><path d="M${cx}.5 ${y0}v${h}M${x0} ${cy}.5h${w}" stroke="#000" stroke-width="1"/>`;
}

// Hollow frame of tubes, seen square on: three lines per side and a faceted corner
function tubeFrame(x1, y1, x2, y2, t) {
    let d = "";
    for (const o of [-t, 0, t]) {
        d += `M${x1} ${y1 + o}H${x2}M${x1} ${y2 + o}H${x2}`;
        d += `M${x1 + o} ${y1}V${y2}M${x2 + o} ${y1}V${y2}`;
    }
    for (const x of [x1, x2]) for (const y of [y1, y2]) {
        d += `M${x - t} ${y}h${2 * t}M${x} ${y - t}v${2 * t}`;
        for (const r of [t, t / 2])
            d += `M${x - r} ${y}l${r} ${-r} ${r} ${r} ${-r} ${r}z`;
    }
    return `<path transform="translate(.5 .5)" d="${d}" fill="none" stroke="#5a8fdb"/>`;
}

function arrow(x1, y1, x2, y2, len, wing, shaft) {
    const a = Math.atan2(y2 - y1, x2 - x1), ux = Math.cos(a), uy = Math.sin(a);
    const p = (b, s) => `${(x2 - ux * b - uy * s).toFixed(1)},${(y2 - uy * b + ux * s).toFixed(1)}`;
    return poly(`${x1},${y1} ${p(len - 2, shaft)} ${p(len, wing)} ${x2},${y2} ${p(len, -wing)} ${p(len - 2, -shaft)}`, "#ff0");
}

const cubeFace = (x, y, s) => `<rect x="${x}" y="${y}" width="30" height="30" fill="#98999b" stroke="#858688"/>` + label(x + 15, y + 22, s, "#6f7478", 18);
const flatRing = (x, y) => `<ellipse cx="${x}" cy="${y}" rx="38" ry="2" fill="none" stroke="#8b8c8e" stroke-width="1"/>`;
const cone = "#a9d5e2";

function groundGrid() {
    const a = [285, 630], b = [515, 562], c = [650, 715], e = [430, 795], n = 14;
    const mix = (p, q, t) => [p[0] + (q[0] - p[0]) * t, p[1] + (q[1] - p[1]) * t].map(Math.round);
    let d = "";
    for (let i = 0; i <= n; i++)
        d += `M${mix(a, b, i / n)}L${mix(e, c, i / n)}M${mix(a, e, i / n)}L${mix(b, c, i / n)}`;
    return `<path d="${d}" stroke="#8d8a86" stroke-width="2"/>`;
}

const scenes = {
    top: { box: "233 125 717 406", names: ["顶", "标准", "线框"], art: `
        ${grid(233, 125, 717, 406, 591, 327, 17.83)}
        ${tubeFrame(342, 307, 693, 488, 15)}
        ${line("668,531 631,440 867,440 832,531", cone)}
        <circle cx="893" cy="180" r="31" fill="none" stroke="#9d9ea0" stroke-width="6"/>
        ${cubeFace(878, 165, "上")}
        ${label(893, 152, "北", "#999", 10)}${label(893, 218, "南", "#999", 10)}${label(860, 184, "西", "#999", 10)}${label(926, 184, "东", "#999", 10)}
        ${line("262,485 262,503", "#080")}${line("262,503 289,503", "#a00")}${label(262, 481, "y", "#0a0")}${label(262, 506, "z", "#00b", 9)}
        ${arrow(890, 354, 850, 430, 20, 9, 4)}` },
    front: { box: "955 125 717 406", names: ["前", "标准", "线框"], art: `
        ${grid(955, 125, 717, 406, 1256, 445, 8.93)}
        ${tubeFrame(1131, 363, 1307, 446, 8)}
        <rect x="1276.500" y="387.500" width="118" height="88" fill="none" stroke="${cone}"/>
        ${line("1277,388 1395,476", cone)}${line("1395,388 1277,476", cone)}
        ${line("1335.5,431 1335.5,358", "#0000c8")}${poly("1335.5,336 1331,359 1340,359", "#0000d0")}${label(1338, 332, "z", "#0000c8")}
        ${line("1336,398.5 1369,398.5", "#0000a0")}${line("1368.5,398 1368.5,431", "#c00")}${line("1355,430.5 1408,430.5", "#a00")}
        ${poly("1408,427 1437,431 1408,436", "#d00000")}${label(1438, 431, "x", "#a00")}
        <rect x="1327" y="425" width="18" height="13" fill="#ddd" stroke="#fff"/><path d="M1330 428h12v7h-12zM1330 428l12 7M1342 428l-12 7" fill="none" stroke="#333"/>
        <path d="M1332 425v-16h6v16M1332 413h6M1332 417h6M1332 421h6" fill="none" stroke="#fff"/>
        ${cubeFace(1600, 165, "前")}${flatRing(1614, 197)}
        ${line("981,485 981,503", "#00c")}${line("981,503 1008,503", "#a00")}${label(983, 481, "z", "#00c")}
        ${arrow(1528, 474, 1411, 461, 17, 8, 4)}` },
    left: { box: "233 536 717 406", names: ["左", "标准", "线框"], art: `
        ${grid(233, 536, 717, 406, 591, 738, 17.83)}
        ${tubeFrame(571, 574, 752, 739, 15)}
        ${line("950,698 704,622 704,799 950,723", cone)}
        ${line("918,710 950,710", "#ee0")}${poly("896,710 918,705 918,715", "#00a000")}${label(892, 712, "y", "#ee0", 13)}
        ${cubeFace(878, 577, "左")}${flatRing(895, 609)}
        ${line("259,892 259,914", "#00c")}${line("241,915 258,915", "#080")}${label(262, 892, "z", "#00c")}${label(238, 917, "y", "#0a0")}${label(263, 918, "x", "#a00")}
        ${arrow(854, 879, 888, 768, 19, 8, 4)}` },
    persp: { box: "955 536 717 406", names: ["透视", "标准", "默认明暗处理"], art: `
        ${line("980.5,914 980.5,896", "#00c")}${line("980,914 1005,906", "#b00")}${line("980,914 974,907", "#080")}${label(983, 896, "z", "#00c")}${label(1007, 908, "x", "#b00")}${label(973, 903, "y", "#080")}
        <g transform="translate(1260 530) scale(.333333)" stroke-width="3">
            ${poly("230,575 573,466 573,493 252,590", "#40566b")}
            ${poly("555,498 581,500 570,628 545,628", "#1a2833")}
            ${poly("230,718 310,696 310,718 232,742", "#40566b")}
            ${groundGrid()}
            ${line("400,597 452,645", "#000")}${line("478,675 548,745", "#000")}
            ${poly("558,648 592,642 664,714 660,738", "#a5c6f2")}
            ${poly("338,845 655,733 685,745 478,812 332,876", "#40566b")}
            ${poly("682,598 706,588 687,744 662,738", "#1a2833")}
            ${poly("335,688 690,575 706,590 700,602 330,718", "#40566b")}
            ${poly("573,466 706,577 686,583 570,492", "#a5c6f2")}
            ${poly("207,590 234,610 230,738 207,745", "#1a2833")}
            ${poly("230,610 238,618 235,735 229,735", "#a5c6f2")}
            ${poly("206,745 230,742 310,835 303,865", "#a5c6f2")}
            ${poly("315,712 344,718 335,875 305,875", "#1a2833")}
            ${line("342,720 336,845", "#9db7d6")}
            ${poly("208,592 225,572 334,692 322,716", "#a5c6f2")}
            ${line("252,590 573,493", "#cfe4f5", 'stroke-dasharray="3 4"')}${line("345,715 690,606", "#cfe4f5", 'stroke-dasharray="3 4"')}${line("345,842 655,738", "#cfe4f5", 'stroke-dasharray="3 4"')}
            ${line("705,586 815,550 787,707 682,743", cone)}${line("815,550 886,812", cone)}${line("787,707 885,812", cone)}${line("605,632 850,810", cone)}
            ${line("585,785 750,824", cone)}${line("587,670 578,760", cone)}${line("704,600 690,720", cone)}
            ${line("845,800 860,735", "#080")}${line("850,800 905,780", "#080")}
            ${line("870,737 925,782 1003,757", "#0000a8")}${line("950,700 922,800", "#0000d0")}${poly("966,632 932,697 962,705", "#0000d0")}${label(967, 624, "z", "#0000d0", 34)}
            ${line("925,785 985,820", "#a00")}${line("1000,760 990,820", "#a00")}${line("1000,820 1070,795", "#a00")}${poly("1060,788 1135,770 1075,808", "#e00000")}${label(1143, 774, "x", "#a00", 34)}
            ${line("772,735 865,822", "#ff0")}${poly("728,697 780,718 765,745", "#00a010")}${label(731, 692, "y", "#ee0", 36)}
            <path d="M832 825q5-25 30-18t20 18M845 825q0-15 15-20M860 803l20 22M838 815l30-12M890 820q5-20 25-18t20 22M905 825q0-15 15-18M900 805l25 20" fill="none" stroke="#fff"/>
            <ellipse cx="1066" cy="235" rx="94" ry="57" fill="none" stroke="#c9cacc" stroke-width="19"/><ellipse cx="1066" cy="233" rx="82" ry="46" fill="none" stroke="#5a5c60" stroke-width="5"/>
            ${poly("1011,137 1085,122 1124,158 1045,174", "#e6e6e6")}${poly("1011,137 1045,174 1062,248 1015,205", "#c4c4c6")}${poly("1045,174 1124,158 1122,228 1062,248", "#d8d8da")}
            ${label(1070, 162, "上", "#777", 27)}${label(1090, 218, "前", "#999", 34)}${label(1030, 210, "左", "#999", 26)}
            ${label(970, 266, "西", "#aaa", 30)}${label(1155, 202, "东", "#aaa", 26)}${label(1120, 302, "南", "#ccc", 30)}
            <path d="M966 62V48l12-15 4 5v-6h6v30z" fill="#b5b9bc"/><circle cx="1203" cy="272" r="6" fill="none" stroke="#bbb" stroke-width="4"/>
        </g>` }
};

class MaxViewport extends HTMLElement {
    constructor() {
        super();
        this.attachShadow({ mode: "open" });
    }

    connectedCallback() {
        const scene = scenes[this.getAttribute("scene")];
        this.shadowRoot.innerHTML = `
        <style>
        :host { display: grid; min-width: 0; min-height: 0; overflow: hidden; background: #353535; font: 11px/14px "Liberation Sans", "Noto Sans CJK SC", sans-serif; }
        :host([active]) { background: linear-gradient(#1b1b1b, #4b4b4b 85%); outline: 2px solid #77701f; outline-offset: -2px; }
        svg, nav { grid-area: 1 / 1; min-width: 0; min-height: 0; }
        svg { width: 100%; height: 100%; shape-rendering: crispEdges; }
        nav { display: flex; gap: 7px; align-self: start; padding: 8px 6px; }
        button { padding: 0; border: 0; background: none; color: #ddd; font: inherit; white-space: pre; }
        :host([active]) svg { shape-rendering: auto; }
        </style>
        <svg viewBox="${scene.box}" preserveAspectRatio="xMidYMid slice">${scene.art}</svg>
        <nav><button>[+]</button>${scene.names.map(n => `<button>[${n} ]</button>`).join("")}</nav>`;
    }
}
customElements.define("max-viewport", MaxViewport);

class RollOut extends HTMLElement {
    constructor() {
        super();
        this.attachShadow({ mode: "open" });
    }

    connectedCallback() {
        this.shadowRoot.innerHTML = `
        <style>
        :host { display: block; margin: 0 13px 4px 5px; padding-bottom: 6px; border-radius: 2px; background: #505050; box-shadow: 0 1px 1px #3a3a3a; }
        h3 { display: flex; align-items: center; gap: 8px; margin: 0; padding: 0 6px; color: #fff; font: bold 13px/18px "Noto Sans CJK SC", sans-serif; }
        h3::before { content: ""; border: 3px solid transparent; border-top: 5px solid #ccc; border-bottom: 0; }
        </style>
        <h3>${this.getAttribute("heading")}</h3>
        <slot></slot>`;
    }
}
customElements.define("roll-out", RollOut);

class CommandPanel extends HTMLElement {
    constructor() {
        super();
        this.attachShadow({ mode: "open" }).innerHTML = `
        <style>
        :host { display: flex; flex-direction: column; flex: none; width: 244px; padding-top: 7px; box-sizing: border-box; }
        .grip { height: 3px; margin: 0 2px 3px; border-top: 2px dotted #777; box-sizing: border-box; }
        .tabs { display: flex; gap: 2px; }
        .tabs max-tool { width: 30px; height: 27px; background: #3c3c3c; }
        .tabs max-tool:first-child { background: none; }
        .kinds { display: flex; gap: 2px; padding: 5px 0 7px 6px; }
        .kinds max-tool { width: 22px; height: 22px; }
        max-select { height: 20px; margin: 0 5px 6px; }
        .auto { display: flex; align-items: center; gap: 4px; padding: 2px 0 1px 66px; height: 20px; color: #858585; }
        .auto input { appearance: none; width: 10px; height: 10px; margin: 0; background: #474747; }
        .types { display: grid; grid-template-columns: 78px 78px; gap: 5px; padding-left: 33px; }
        .types button { height: 16px; padding: 0; border: 0; border-radius: 3px; background: #646464; color: #eee; font: inherit; line-height: 16px; }
        .name { display: flex; align-items: center; gap: 4px; padding: 7px 0 3px 39px; }
        .name input { width: 130px; height: 18px; padding: 0 2px; border: 0; box-sizing: border-box; background: #5e5e5e; color: #eee; font: 10px "Liberation Mono", monospace; }
        .name button { width: 17px; height: 20px; padding: 0; border: 1px solid #222; background: #a1b5e6; }
        </style>
        <div class="grip"></div>
        <div class="tabs">
            ${["plus", "modify", "hierarchy", "motion", "display", "utility"].map(n => `<max-tool icon="${n}" size="17"></max-tool>`).join("")}
        </div>
        <div class="kinds">
            ${["geo", "shapes", "light", "camera", "helper", "warp", "gears"].map(n => `<max-tool icon="${n}" size="17" ${n === "camera" ? "active" : ""}></max-tool>`).join("")}
        </div>
        <max-select label="子类别" value="标准"></max-select>
        <roll-out heading="对象类型">
            <label class="auto"><input type="checkbox" disabled>自动栅格</label>
            <div class="types"><button>物理</button><button>目标</button><button>自由</button></div>
        </roll-out>
        <roll-out heading="名称和颜色">
            <div class="name"><input type="text" value="Camera002" aria-label="对象名称"><button aria-label="对象颜色"></button></div>
        </roll-out>`;
    }
}
customElements.define("command-panel", CommandPanel);

class TimeLine extends HTMLElement {
    constructor() {
        super();
        // numbers stop where the site badge begins to cover the track
        let ticks = "";
        for (let i = 0; i <= 100; i++)
            ticks += i % 5 ? "<li></li>" : `<li class="major">${i > 70 ? "" : `<span>${i}</span>`}</li>`;
        this.attachShadow({ mode: "open" }).innerHTML = `
        <style>
        :host { display: flex; flex: none; height: 51px; }
        .grip { width: 3px; margin: 6px 4px 2px 2px; border-left: 2px dotted #777; box-sizing: border-box; }
        .rows { flex: 1; display: flex; flex-direction: column; min-width: 0; }
        .slider { display: flex; gap: 2px; height: 16px; padding: 5px 0 4px 1px; border-bottom: 1px solid #1c1c1c; }
        button { width: 14px; padding: 0; border: 0; border-radius: 2px; background: #5c5c5c; color: #ddd; font: inherit; line-height: 16px; }
        .slider .thumb { width: 123px; background: #646464; }
        .track { flex: 1; display: flex; }
        .track button { width: 48px; padding-right: 8px; box-sizing: border-box; display: grid; place-items: center; background: none; }
        ul { flex: 1; display: flex; margin: 0; padding: 0 52px 0 0; list-style: none; background: #2b2b2b; color: #ccc; }
        li { flex: 1 1 0; min-width: 0; display: grid; justify-items: center; align-content: start; }
        li::before { content: ""; grid-area: 1 / 1; width: 1px; height: 12px; background: #777; }
        .major::before { height: 25px; }
        .major span { grid-area: 1 / 1; margin-top: 10px; }
        li:first-child { background: linear-gradient(90deg, transparent 5px, #8a8419 5px 12px, transparent 12px); }
        </style>
        <div class="grip"></div>
        <div class="rows">
            <div class="slider"><button aria-label="上一帧">&lt;</button><button class="thumb">0 / 100</button><button aria-label="下一帧">&gt;</button></div>
            <div class="track"><button aria-label="打开迷你曲线编辑器"><max-icon name="keyline" size="15"></max-icon></button><ul>${ticks}</ul></div>
        </div>`;
    }
}
customElements.define("time-line", TimeLine);

class CoordField extends HTMLElement {
    constructor() {
        super();
        this.attachShadow({ mode: "open" });
    }

    connectedCallback() {
        const axis = this.getAttribute("axis");
        this.shadowRoot.innerHTML = `
        <style>
        :host { display: flex; align-items: center; }
        div { display: flex; align-items: center; width: 68px; height: 17px; margin-left: 1px; background: var(--field); }
        input { flex: 1; min-width: 0; padding: 0 0 0 2px; border: 0; background: none; color: #ddd; font: 10px "Liberation Mono", monospace; }
        svg { margin-right: 3px; fill: #ddd; }
        </style>
        <label for="v">${axis}:</label>
        <div><input id="v" value="${this.getAttribute("value")}"><svg width="6" height="11"><path d="M0 4l3-4 3 4zM0 7h6l-3 4z"/></svg></div>`;
    }
}
customElements.define("coord-field", CoordField);

class StatusBar extends HTMLElement {
    constructor() {
        super();
        this.attachShadow({ mode: "open" }).innerHTML = `
        <style>
        :host { display: flex; flex: none; height: 56px; padding-left: 4px; box-sizing: border-box; }
        .script { width: 98px; margin-top: 5px; display: flex; flex-direction: column; gap: 1px; }
        .script input { height: 22px; padding: 0 4px; border: 2px solid #fff; border-top-color: #777; border-left-color: #999; box-sizing: border-box; width: 100%; background: #fff; color: #777; font: inherit; }
        .script input:first-child { background: #dcc5c5; }
        .script input::placeholder { color: #888; }
        .text { flex: 1; display: flex; flex-direction: column; gap: 9px; margin: 5px 0 5px 4px; padding: 6px 0 0 4px; border-left: 2px solid #222; color: #fff; }
        p { margin: 0; }
        .side { display: flex; flex-direction: column; align-items: flex-end; gap: 6px; margin: 9px 7px 0 0; }
        .row { display: flex; align-items: center; gap: 3px; height: 18px; color: #fff; }
        .row span { margin-left: 2px; font-size: 11px; }
        .icons { display: flex; gap: 12px; margin-right: 6px; }
        .tag { display: flex; align-items: center; gap: 4px; padding: 0; border: 0; background: none; color: #ddd; font: inherit; }
        .tag max-icon { padding: 3px; border-radius: 3px; background: var(--blue); }
        .rest { width: 509px; }
        </style>
        <div class="script">
            <input aria-label="宏录制器">
            <input aria-label="脚本侦听器" placeholder="MAXScript 迷你">
        </div>
        <div class="text"><p>选择了 1 个 摄影机</p><p>单击并拖动以选择并移动对象</p></div>
        <div class="side">
            <div class="row">
                <div class="icons"><max-icon name="iso" size="15"></max-icon><max-icon name="lock" size="15"></max-icon><max-icon name="target" size="15"></max-icon></div>
                <coord-field axis="X" value="88.515"></coord-field>
                <coord-field axis="Y" value="-223.585"></coord-field>
                <coord-field axis="Z" value="15.686"></coord-field>
                <span>栅格 = 10.0</span>
            </div>
            <button class="tag"><max-icon name="cube" size="15"></max-icon>添加时间标记</button>
        </div>
        <div class="rest"></div>`;
    }
}
customElements.define("status-bar", StatusBar);

class SiteBadge extends HTMLElement {
    constructor() {
        super();
        this.attachShadow({ mode: "open" }).innerHTML = `
        <style>
        :host { display: flex; align-items: center; width: 509px; height: 254px; padding-left: 46px; box-sizing: border-box; background: #fff; color: #0c0c0c; }
        svg { flex: none; width: 136px; height: 116px; }
        div { display: flex; flex-direction: column; white-space: nowrap; }
        strong { font: italic 900 55px/56px "Noto Sans CJK SC", sans-serif; }
        span { font: italic 600 36px/36px "Open Sans", sans-serif; }
        </style>
        <svg viewBox="222 342 396 336">
            <defs><linearGradient id="tower" x2="0" y2="1"><stop stop-color="#163a86"/><stop offset=".5" stop-color="#2450a0"/><stop offset="1" stop-color="#5f8fca"/></linearGradient></defs>
            <path d="M247 490Q300 385 430 352q180-30 180 95 0 20-14 42 2-110-105-112-90-10-170 45-40 28-74 68z" fill="#8fbe2a"/>
            <path d="M425 402l68 37v30l-30 16v110l-38 10zM522 478l45 26-8 20-36 20z" fill="#dcdcde"/>
            <path d="M342 432l69-36v212h-69z" fill="url(#tower)"/>
            <path d="M449 494l60-28v103l-60 26zM253 540l57-32v92q-45-16-57-60z" fill="#1a4092"/>
            <path d="M243 513q-8 85 82 106 95 12 180-40 80-45 110-103-6 80-115 140-85 56-165 54-105-15-109-100-1-30 17-57z" fill="#164196"/>
        </svg>
        <div><strong>土木工程网</strong><span>www.civilcn.com</span></div>`;
    }
}
customElements.define("site-badge", SiteBadge);

class MaxApp extends HTMLElement {
    constructor() {
        super();
        this.attachShadow({ mode: "open" }).innerHTML = `
        <style>
        :host { position: relative; display: flex; flex-direction: column; height: 100vh; overflow: hidden; background: #454545; }
        .body, .work { display: flex; flex: 1; min-height: 0; }
        .column { display: flex; flex-direction: column; flex: 1; min-width: 0; }
        .views { flex: 1; display: grid; grid-template: 1fr 1fr / 1fr 1fr; gap: 5px; padding: 5px 4px 1px; min-width: 0; background: #404040; }
        footer { display: flex; flex: none; align-items: flex-start; height: 8px; padding-left: 16px; background: #101010; }
        footer i { width: 10px; height: 2px; margin: 6px 24px 0 0; background: #bbb; border-radius: 3px 3px 0 0; }
        footer i.b { background: #2a6cc0; margin-left: 80px; }
        footer i.w { margin-left: 90px; height: 2px; background: #eee; }
        .notes { position: absolute; top: 0; right: 0; width: 400px; height: 760px; pointer-events: none; }
        site-badge { position: absolute; right: 0; bottom: 0; }
        </style>
        <title-bar></title-bar>
        <menu-bar></menu-bar>
        <tool-bar></tool-bar>
        <div class="body">
            <side-tools></side-tools>
            <div class="column">
                <ribbon-bar></ribbon-bar>
                <div class="work">
                    <layout-tabs></layout-tabs>
                    <scene-explorer></scene-explorer>
                    <div class="views">
                        <max-viewport scene="top"></max-viewport>
                        <max-viewport scene="front"></max-viewport>
                        <max-viewport scene="left"></max-viewport>
                        <max-viewport scene="persp" active></max-viewport>
                    </div>
                    <command-panel></command-panel>
                </div>
                <time-line></time-line>
            </div>
        </div>
        <status-bar></status-bar>
        <footer><i></i><i></i><i></i><i></i><i class="w"></i><i class="b"></i><i class="b"></i><i class="w"></i></footer>
        <svg class="notes" viewBox="1520 0 400 760">
            <rect x="1697.500" y="85.500" width="199" height="355" fill="none" stroke="#ff0" stroke-width="7"/>
            ${arrow(1714, 308, 1570, 728, 18, 8, 5)}
        </svg>
        <site-badge></site-badge>`;
    }
}
customElements.define("max-app", MaxApp);
</script>
</body>
</html>
